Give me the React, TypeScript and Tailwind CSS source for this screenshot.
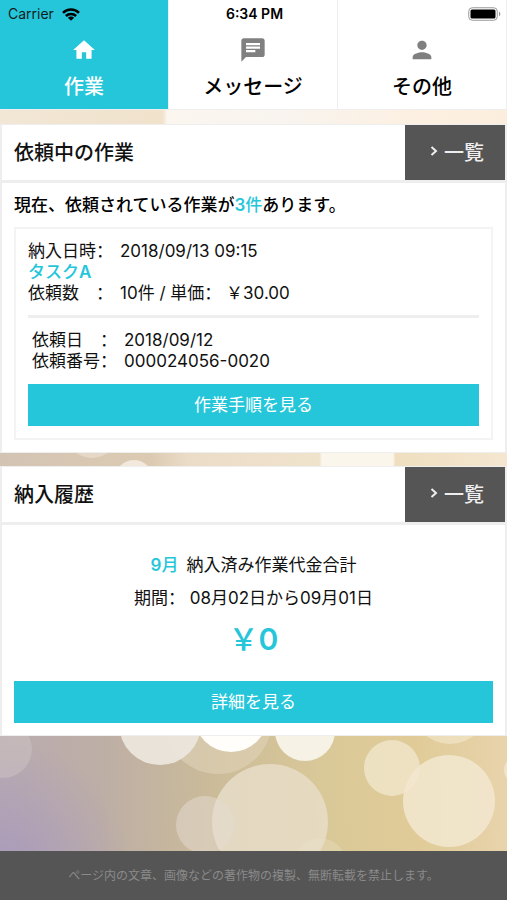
import type { ReactNode } from "react";
import { MdChat, MdHome, MdPerson } from "react-icons/md";

const bokeh = [
  { x: 3, y: 749, r: 29, fill: "#cfc4c4", o: 0.5 },
  { x: 218, y: 720, r: 54, fill: "#e0d2b8", o: 0.6 },
  { x: 160, y: 724, r: 41, fill: "#ebe6dd", o: 0.95 },
  { x: 231, y: 715, r: 37, fill: "#fffefb", o: 1 },
  { x: 305, y: 731, r: 30, fill: "#f6f2e6", o: 1 },
  { x: 320, y: 864, r: 26, fill: "#e6d9b8", o: 0.5 },
  { x: 270, y: 822, r: 58, fill: "#e8decb", o: 0.8 },
  { x: 205, y: 825, r: 29, fill: "#e6dcd4", o: 0.5 },
  { x: 392, y: 768, r: 28, fill: "#f0e6cc", o: 0.8 },
  { x: 449, y: 801, r: 46, fill: "#f2e8d0", o: 0.85 },
  { x: 450, y: 705, r: 39, fill: "#f2e6c8", o: 0.7 },
  { x: 518, y: 770, r: 14, fill: "#f4e8d0", o: 0.8 },
  { x: 134, y: 479, r: 19, fill: "#f4ebe0", o: 0.9 },
  { x: 92, y: 430, r: 28, fill: "#e8dccb", o: 0.8 },
];

function Backdrop() {
  return (
    <svg
      className="absolute inset-0 -z-10 h-full w-full"
      viewBox="0 0 507 900"
      preserveAspectRatio="xMidYMid slice"
      aria-hidden="true"
    >
      <defs>
        <linearGradient id="base" x1="0" y1="0.9" x2="1" y2="0.86">
          <stop offset="0" stopColor="#b9abb0" />
          <stop offset="0.2" stopColor="#bdaea6" />
          <stop offset="0.42" stopColor="#cbbb99" />
          <stop offset="0.65" stopColor="#dac998" />
          <stop offset="0.82" stopColor="#e0cb98" />
          <stop offset="1" stopColor="#e8d3ac" />
        </linearGradient>
        <radialGradient id="violet" gradientUnits="userSpaceOnUse" cx="0" cy="870" r="130">
          <stop offset="0" stopColor="#a99abb" />
          <stop offset="1" stopColor="#a99abb" stopOpacity="0" />
        </radialGradient>
        <linearGradient id="top" x1="0" y1="0" x2="1" y2="0">
          <stop offset="0" stopColor="#f2e7d6" />
          <stop offset="0.32" stopColor="#f0e2cb" />
          <stop offset="0.33" stopColor="#fbf6ee" />
          <stop offset="0.55" stopColor="#f8f4ef" />
          <stop offset="0.8" stopColor="#fcf0e2" />
          <stop offset="1" stopColor="#fbeedd" />
        </linearGradient>
        <linearGradient id="middle" x1="0" y1="0" x2="1" y2="0">
          <stop offset="0" stopColor="#d3c3b3" />
          <stop offset="0.3" stopColor="#dccbb2" />
          <stop offset="0.37" stopColor="#ebdcc8" />
          <stop offset="0.63" stopColor="#f0e3cc" />
          <stop offset="0.635" stopColor="#fbf6ec" />
          <stop offset="0.775" stopColor="#fbf6ec" />
          <stop offset="0.78" stopColor="#efdfc0" />
          <stop offset="1" stopColor="#f4e6d0" />
        </linearGradient>
      </defs>
      <rect width="507" height="900" fill="url(#base)" />
      <rect y="640" width="160" height="260" fill="url(#violet)" />
      <rect width="507" height="300" fill="url(#top)" />
      <rect y="300" width="507" height="300" fill="url(#middle)" />
      {bokeh.map((c, i) => (
        <circle key={i} cx={c.x} cy={c.y} r={c.r} fill={c.fill} opacity={c.o} />
      ))}
    </svg>
  );
}

function StatusBar() {
  return (
    <div className="absolute inset-x-0 top-0 grid h-7 grid-cols-3 items-center pr-1.5 pl-2 text-sm leading-5 text-[#101c20]">
      <div className="flex items-center gap-2">
        <span>Carrier</span>
        <svg width="18" height="13" viewBox="0 0 18 13" fill="none" stroke="#000" strokeWidth="2.5" aria-hidden="true">
          <path d="M1 4.8a11.3 11.3 0 0 1 16 0" />
          <path d="M3.9 8a7.2 7.2 0 0 1 10.2 0" />
          <path d="M9 12.8 5.9 9.7a4.4 4.4 0 0 1 6.2 0z" fill="#000" stroke="none" />
        </svg>
      </div>
      <div className="text-center font-semibold text-black">6:34 PM</div>
      <svg className="justify-self-end" width="33" height="14" viewBox="0 0 33 14" aria-hidden="true">
        <rect x="0.75" y="0.75" width="28.5" height="12.5" rx="3.5" fill="#fff" stroke="#999" />
        <rect x="2.5" y="2.5" width="25" height="9" rx="1.5" fill="#000" />
        <path d="M31 4.8c1.8.6 1.8 3.8 0 4.4z" fill="#999" />
      </svg>
    </div>
  );
}

function Tab({ icon, label, active }: { icon: ReactNode; label: string; active?: boolean }) {
  return (
    <a
      href="#"
      aria-current={active ? "page" : undefined}
      className={
        active
          ? "flex flex-col items-center gap-[9px] border-r border-[#eee] bg-[#26c6da] pt-9 pb-2 text-white"
          : "flex flex-col items-center gap-[9px] border-r border-[#eee] bg-white pt-9 pb-2 text-black"
      }
    >
      <span className={active ? "flex h-7 items-center text-white" : "flex h-7 items-center text-[#808080]"}>{icon}</span>
      <span className="text-xl leading-7 font-medium">{label}</span>
    </a>
  );
}

function Card({ title, children }: { title: string; children: ReactNode }) {
  return (
    <section className="border-2 border-t border-b-1 border-[#eee] bg-white">
      <div className="flex items-stretch justify-between border-b-3 border-[#eee]">
        <h2 className="flex h-[55px] items-center pl-3 text-xl leading-7 font-medium">{title}</h2>
        <a href="#" className="flex w-[100px] items-center justify-center gap-1.5 bg-[#555] pl-1 text-xl text-[#eee]">
          <svg width="8" height="12" viewBox="0 0 8 12" fill="none" stroke="currentColor" strokeWidth="2" className="mb-1" aria-hidden="true">
            <path d="M1.5 2 6 6l-4.5 4" />
          </svg>
          <span className="leading-7 font-medium">一覧</span>
        </a>
      </div>
      {children}
    </section>
  );
}

// Chinese typesetting puts the full-width colon at the left of its box.
function Colon() {
  return <span lang="zh-CN">：</span>;
}

function Field({ label, children }: { label: string; children: ReactNode }) {
  return (
    <div className="flex">
      <dt className="w-[92px] whitespace-pre">
        {label}
        <Colon />
      </dt>
      <dd>{children}</dd>
    </div>
  );
}

function Action({ children }: { children: ReactNode }) {
  return (
    <button type="button" className="block h-[42px] w-full bg-[#26c6da] text-[17px] leading-6 text-white">
      {children}
    </button>
  );
}

export default function App() {
  return (
    <div
      lang="ja"
      className="relative isolate flex min-h-screen flex-col font-[Inter,'Noto_Sans_CJK_JP',sans-serif] text-[17px] leading-[21px] text-[#111]"
    >
      <Backdrop />
      <header className="relative">
        <nav className="grid grid-cols-3 border-b border-[#eee]">
          <Tab active icon={<MdHome size={26} />} label="作業" />
          <Tab icon={<MdChat size={28} />} label="メッセージ" />
          <Tab icon={<MdPerson size={28} />} label="その他" />
        </nav>
        <StatusBar />
      </header>

      <main className="flex flex-1 flex-col gap-[13px] pt-3.5">
        <Card title="依頼中の作業">
          <div className="px-3 pt-3 pb-3">
            <p className="mb-[11px] font-medium text-black">
              現在、依頼されている作業が
              <span className="text-[#26c6da]">
                <b className="font-semibold">3</b>件
              </span>
              あります。
            </p>
            <div className="border-2 border-[#f3f3f3] p-3">
              <dl>
                <Field label="納入日時">2018/09/13 09:15</Field>
                <div className="font-medium text-[#26c6da]">
                  タスク<b className="font-semibold">A</b>
                </div>
                <Field label="依頼数　">
                  10件 / 単価
                  <Colon /> ￥30.00
                </Field>
              </dl>
              <hr className="mt-[11px] mb-3 border-t-3 border-[#eee]" />
              <dl className="mb-3 pl-1">
                <Field label="依頼日　">2018/09/12</Field>
                <Field label="依頼番号">000024056-0020</Field>
              </dl>
              <Action>作業手順を見る</Action>
            </div>
          </div>
        </Card>

        <Card title="納入履歴">
          <div className="px-3 pt-6 pb-3 text-center leading-[33px]">
            <p>
              <span className="mr-2 font-medium text-[#26c6da]">
                <b className="font-semibold">9</b>月
              </span>
              納入済み作業代金合計
            </p>
            <p>
              期間
              <Colon /> 08月02日から09月01日
            </p>
            <p className="mt-1.5 mb-6 text-3xl leading-9 font-medium text-[#26c6da]">
              ￥<b className="font-semibold">0</b>
            </p>
            <Action>詳細を見る</Action>
          </div>
        </Card>
      </main>

      <footer className="bg-[#555] py-4 text-center text-xs leading-[17px] text-[#8a8a8a]">
        ページ内の文章、画像などの著作物の複製、無断転載を禁止します。
      </footer>
    </div>
  );
}
